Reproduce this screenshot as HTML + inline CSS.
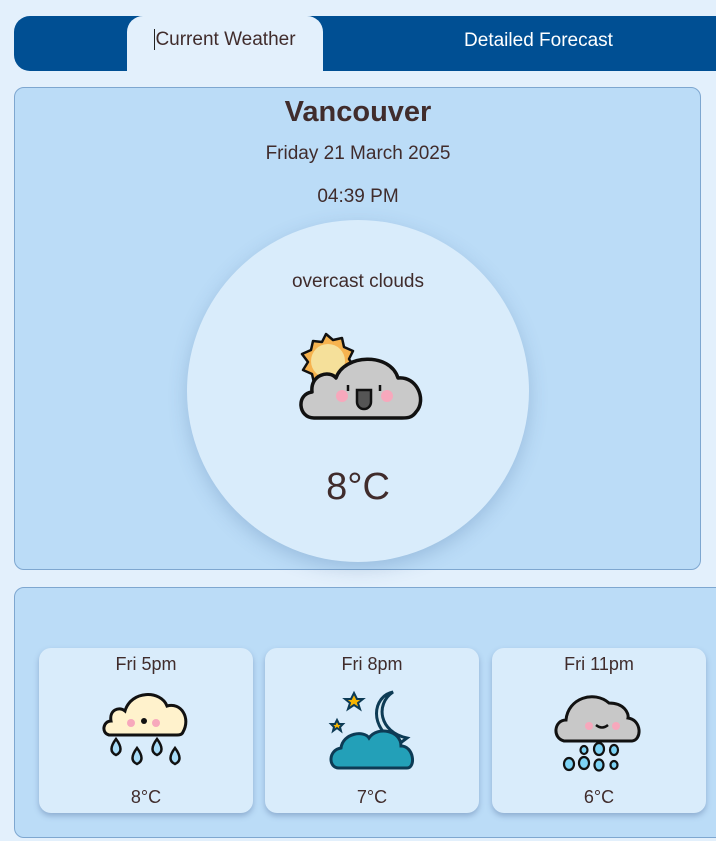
<!DOCTYPE html>
<html><head><style>
body{margin:0;width:716px;height:841px;overflow:hidden;background:#e3f0fc;font-family:"Liberation Sans",sans-serif;color:#402c2c;position:relative}
.bar{position:absolute;left:14px;top:16px;width:720px;height:55px;background:#004f93;border-radius:16px}
.tab{position:absolute;left:127px;top:16px;width:196px;height:55px;background:#e3f0fc;border-radius:16px 16px 0 0;font-size:19px;line-height:48px;text-align:center}
.tab2{position:absolute;left:400px;top:16px;width:277px;height:50px;color:#fff;font-size:19px;line-height:48px;text-align:center}
.card{position:absolute;left:14px;top:87px;width:687px;height:483px;background:#bbdcf7;border:1px solid #7ea7d0;border-radius:10px;box-sizing:border-box}
.c{position:absolute;left:0;width:716px;text-align:center}
.circle{position:absolute;left:187px;top:220px;width:342px;height:342px;border-radius:50%;background:#d9ecfb;box-shadow:0 6px 18px rgba(60,100,150,.25)}
.card2{position:absolute;left:14px;top:587px;width:720px;height:251px;background:#bbdcf7;border:1px solid #7ea7d0;border-radius:10px;box-sizing:border-box}
.m{position:absolute;top:648px;width:214px;height:165px;background:#d9ecfb;border-radius:12px;box-shadow:0 3px 6px rgba(60,90,140,.35);text-align:center;font-size:18px}
.m .t{position:absolute;top:6px;width:100%}
.m .b{position:absolute;top:139px;width:100%}
.m svg{position:absolute;left:62px;top:40px}
</style></head><body>
<div class="bar"></div>
<div class="tab"><span style="border-left:1px solid #222"></span>Current Weather</div>
<div class="tab2" style="top:17px">Detailed Forecast</div>
<div class="card"></div>
<div class="c" style="top:96px;font-size:29px;font-weight:bold">Vancouver</div>
<div class="c" style="top:143px;font-size:19px">Friday 21 March 2025</div>
<div class="c" style="top:186px;font-size:19px">04:39 PM</div>
<div class="circle"></div>
<div class="c" style="top:271px;font-size:19px">overcast clouds</div>
<svg style="position:absolute;left:292px;top:330px" width="132" height="95" viewBox="0 0 132 95">
<polygon points="34,4 41,10 50,8 52,17 61,21 57,29 62,37 54,42 53,51 44,50 38,57 31,51 22,53 20,44 11,40 16,32 10,24 19,20 21,11 30,12" fill="#f6b34f" stroke="#111" stroke-width="2.5" stroke-linejoin="round"/>
<circle cx="36" cy="31" r="17" fill="#f5e09a"/>
<path d="M22,88 C6,88 4,64 20,62 C18,44 38,40 44,48 C52,24 98,22 106,48 C125,46 135,70 124,82 C120,88 115,88 110,88 Z" fill="#c9c9c9" stroke="#111" stroke-width="3.5" stroke-linejoin="round"/>
<circle cx="50" cy="66" r="6" fill="#f7a8bc"/><circle cx="95" cy="66" r="6" fill="#f7a8bc"/>
<line x1="56" y1="55" x2="56" y2="61" stroke="#111" stroke-width="2.5"/><line x1="88" y1="55" x2="88" y2="61" stroke="#111" stroke-width="2.5"/>
<path d="M65,60 h14 v12 a7,7 0 0 1 -14,0 z" fill="#555" stroke="#111" stroke-width="2.5"/>
</svg>
<div class="c" style="top:466px;font-size:38px">8°C</div>
<div class="card2"></div>
<div class="m" style="left:39px"><div class="t">Fri 5pm</div>
<svg width="90" height="85" viewBox="0 0 90 85"><path d="M8,47 C0,45 2,33 10,33 C8,22 18,18 24,23 C30,2 60,2 66,18 C80,14 90,30 82,44 C81,47 78,47 76,47 Z" fill="#fff2cc" stroke="#111" stroke-width="3"/><circle cx="30" cy="35" r="4" fill="#f7a8bc"/><circle cx="55" cy="35" r="4" fill="#f7a8bc"/><circle cx="43" cy="33" r="3" fill="#111"/><g fill="#a8dcf8" stroke="#111" stroke-width="2.5"><path d="M15,51 q-9,12 0,16 q9,-4 0,-16z"/><path d="M36,60 q-9,12 0,16 q9,-4 0,-16z"/><path d="M56,51 q-9,12 0,16 q9,-4 0,-16z"/><path d="M74,60 q-9,12 0,16 q9,-4 0,-16z"/></g></svg>
<div class="b">8°C</div></div>
<div class="m" style="left:265px"><div class="t">Fri 8pm</div>
<svg width="90" height="85" viewBox="0 0 90 85"><path d="M66,4 C46,8 40,40 72,56 L80,50 C52,44 48,16 66,4Z" fill="#d9ecf5" stroke="#0d3b55" stroke-width="3"/><polygon points="27,5 30,11 36,11 31,15 33,21 27,17 21,21 23,15 18,11 24,11" fill="#f8b500" stroke="#0d3b55" stroke-width="2"/><polygon points="10,32 12,36 16,36 13,39 14,43 10,40 6,43 7,39 4,36 8,36" fill="#f8b500" stroke="#0d3b55" stroke-width="2"/><path d="M12,80 C1,80 1,62 14,60 C16,45 37,42 42,50 C50,38 74,42 74,58 C87,58 89,80 80,80 Z" fill="#23a0b8" stroke="#0d3b55" stroke-width="3"/></svg>
<div class="b">7°C</div></div>
<div class="m" style="left:492px"><div class="t">Fri 11pm</div>
<svg width="90" height="85" viewBox="0 0 90 85"><path d="M10,53 C-2,50 0,32 12,32 C14,10 40,2 55,15 C70,15 75,25 74,30 C88,32 88,52 78,53 Z" fill="#c8c8c8" stroke="#111" stroke-width="3"/><circle cx="35" cy="38" r="4" fill="#f7a8bc"/><circle cx="62" cy="38" r="4" fill="#f7a8bc"/><path d="M42,37 q6,5 12,0" fill="none" stroke="#111" stroke-width="2.5"/><g fill="#7dd3f5" stroke="#111" stroke-width="2.2"><ellipse cx="30" cy="62" rx="3.5" ry="4"/><ellipse cx="45" cy="61" rx="5" ry="6"/><ellipse cx="60" cy="62" rx="4" ry="5"/><ellipse cx="15" cy="76" rx="5" ry="6"/><ellipse cx="30" cy="75" rx="5" ry="6"/><ellipse cx="45" cy="77" rx="4.5" ry="5.5"/><ellipse cx="60" cy="77" rx="3.5" ry="4"/></g></svg>
<div class="b">6°C</div></div>
</body></html>
